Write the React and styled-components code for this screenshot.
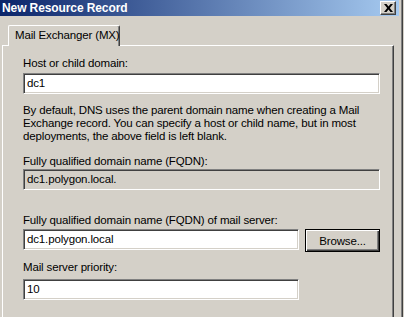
import React from "react";
import styled, { createGlobalStyle } from "styled-components";

const GlobalStyle = createGlobalStyle`
  html, body {
    margin: 0;
    padding: 0;
    background: #d4d0c8;
  }
  body {
    font-family: "Liberation Sans", Arial, sans-serif;
    font-size: 11.5px;
    letter-spacing: -0.15px;
    color: #000;
  }
`;

const Window = styled.div`
  width: 403px;
  height: 317px;
  box-sizing: border-box;
  overflow: hidden;
  background: #d4d0c8;
  border-right: 1px solid #404040;
  box-shadow: inset -1px 0 #808080;
  display: flex;
  flex-direction: column;
`;

const TitleBar = styled.div`
  height: 16px;
  margin-right: 3px;
  padding: 0 3px 0 2px;
  display: flex;
  align-items: center;
  justify-content: space-between;
  background: linear-gradient(to right, #0a246a, #a6caf0);
`;

const Title = styled.span`
  color: #fff;
  font-weight: bold;
  font-size: 12px;
  letter-spacing: -0.1px;
`;

const CloseButton = styled.div`
  width: 16px;
  height: 14px;
  box-sizing: border-box;
  background: #d4d0c8;
  border: 1px solid;
  border-color: #fff #404040 #404040 #fff;
  box-shadow: inset -1px -1px #808080;
  display: flex;
  align-items: center;
  justify-content: center;
`;

const Body = styled.div`
  flex: 1;
  padding: 9px 0 0 2px;
  display: flex;
  flex-direction: column;
`;

const TabStrip = styled.div`
  display: flex;
  padding-left: 6px;
  height: 20px;
`;

const Tab = styled.div`
  position: relative;
  z-index: 1;
  width: 112px;
  height: 21px;
  box-sizing: border-box;
  padding-left: 6px;
  background: #d4d0c8;
  border-top: 1px solid #fff;
  border-left: 1px solid #fff;
  border-right: 1px solid #404040;
  box-shadow: inset -1px 0 #808080;
  border-radius: 2px 2px 0 0;
  line-height: 18px;
  white-space: nowrap;
`;

const Panel = styled.div`
  flex: 1;
  width: 392px;
  box-sizing: border-box;
  padding: 11px 0 0 20px;
  border-top: 1px solid #fff;
  border-left: 1px solid #fff;
  border-right: 1px solid #404040;
  box-shadow: inset -1px 0 #808080;
`;

const Label = styled.div`
  line-height: 13px;
  margin-top: ${(p) => p.$gap || 0}px;
  white-space: nowrap;
`;

const Note = styled.p`
  margin: 10px 0 0;
  line-height: 13px;
  white-space: nowrap;
`;

const TextBox = styled.div`
  width: ${(p) => p.$width}px;
  height: 21px;
  margin-top: ${(p) => p.$gap || 0}px;
  box-sizing: border-box;
  padding: 0 3px;
  border: 1px solid;
  border-color: #808080 #fff #fff #808080;
  box-shadow: inset 1px 1px #404040, inset -1px -1px #d4d0c8;
  background: ${(p) => (p.$readOnly ? "#d4d0c8" : "#fff")};
  line-height: 19px;
  white-space: nowrap;
`;

const Row = styled.div`
  display: flex;
  align-items: flex-start;
  gap: 6px;
  margin-top: 2px;
`;

const Button = styled.div`
  width: 75px;
  height: 23px;
  box-sizing: border-box;
  border: 1px solid #000;
  box-shadow: inset 1px 1px #fff, inset -1px -1px #404040, inset -2px -2px #808080;
  background: #d4d0c8;
  display: flex;
  align-items: center;
  justify-content: center;
`;

const CloseIcon = () => (
  <svg width="9" height="8" viewBox="0 0 9 8">
    <path
      d="M0 0h2.5L4.5 2.6 6.5 0H9L5.8 4 9 8H6.5L4.5 5.4 2.5 8H0l3.2-4z"
      fill="#000"
    />
  </svg>
);

export default function App() {
  return (
    <>
      <GlobalStyle />
      <Window>
        <TitleBar>
          <Title>New Resource Record</Title>
          <CloseButton>
            <CloseIcon />
          </CloseButton>
        </TitleBar>
        <Body>
          <TabStrip>
            <Tab>Mail Exchanger (MX)</Tab>
          </TabStrip>
          <Panel>
            <Label>Host or child domain:</Label>
            <TextBox $width={357} $gap={3}>dc1</TextBox>
            <Note>
              By default, DNS uses the parent domain name when creating a Mail
              <br />
              Exchange record. You can specify a host or child name, but in most
              <br />
              deployments, the above field is left blank.
            </Note>
            <Label $gap={12}>Fully qualified domain name (FQDN):</Label>
            <TextBox $width={357} $gap={1} $readOnly>
              dc1.polygon.local.
            </TextBox>
            <Label $gap={24}>Fully qualified domain name (FQDN) of mail server:</Label>
            <Row>
              <TextBox $width={276}>dc1.polygon.local</TextBox>
              <Button>Browse...</Button>
            </Row>
            <Label $gap={9}>Mail server priority:</Label>
            <TextBox $width={276} $gap={5}>10</TextBox>
          </Panel>
        </Body>
      </Window>
    </>
  );
}
